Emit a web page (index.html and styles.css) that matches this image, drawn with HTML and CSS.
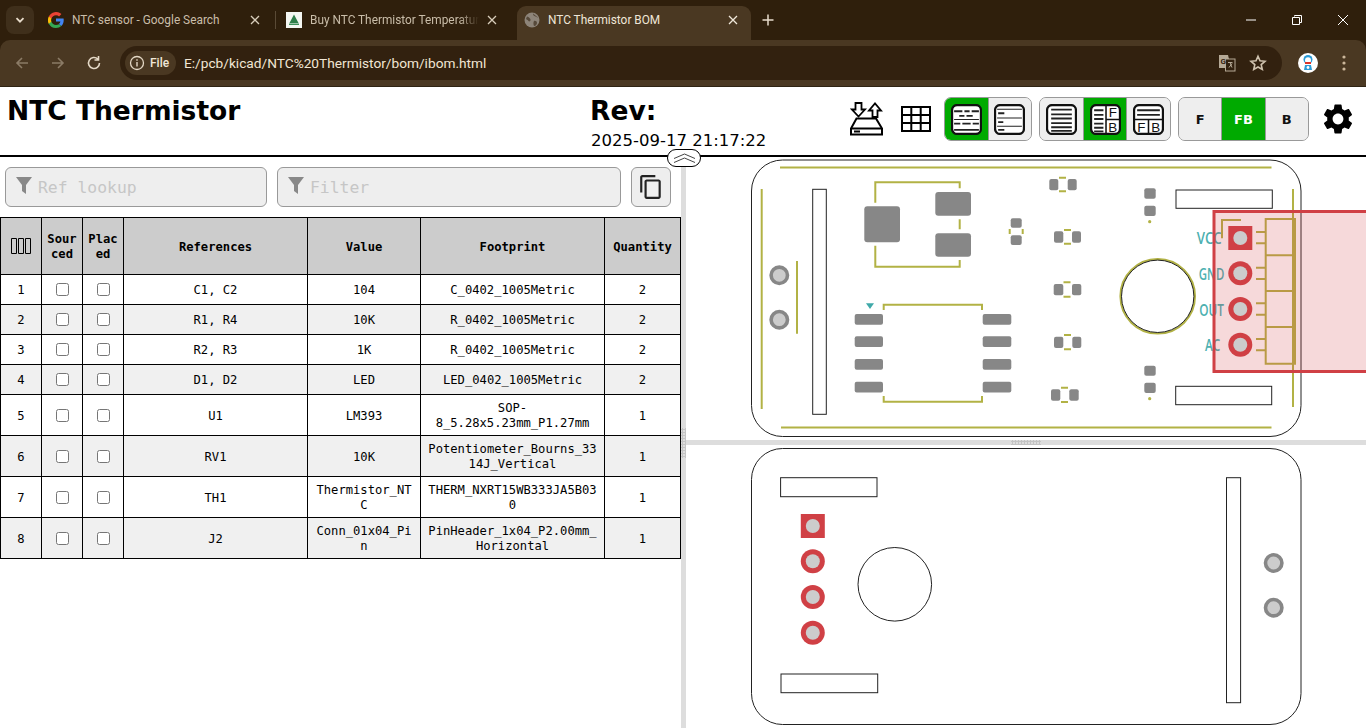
FILE: index.html
```html
<!DOCTYPE html>
<html lang="en">
<head>
<meta charset="utf-8">
<title>NTC Thermistor BOM</title>
<link rel="stylesheet" href="styles.css">
</head>
<body>
<div class="browser">
  <div class="tabstrip">
    <div class="tabsearch"><svg width="12" height="12" viewBox="0 0 12 12"><path d="M2.500 4.200 6 7.700l3.500-3.500" fill="none" stroke="#e8dccb" stroke-width="1.800"/></svg></div>
    <div class="tab tab1">
      <svg class="fav" width="16" height="16" viewBox="0 0 16 16"><path d="M15.700 8.200c0-.6-.05-1.100-.15-1.600H8v3h4.400a3.700 3.700 0 0 1-1.600 2.500l2.500 1.900c1.500-1.400 2.400-3.400 2.400-5.800z" fill="#4285f4"/><path d="M8 16c2.200 0 4-.7 5.300-1.900l-2.500-1.900c-.7.5-1.600.8-2.800.8-2.100 0-3.900-1.400-4.600-3.300H.8v2A8 8 0 0 0 8 16z" fill="#34a853"/><path d="M3.400 9.700a4.800 4.800 0 0 1 0-3.100v-2H.8a8 8 0 0 0 0 7.200z" fill="#fbbc05"/><path d="M8 3.200c1.200 0 2.300.4 3.100 1.200l2.300-2.300A8 8 0 0 0 .8 4.500l2.600 2C4.100 4.600 5.900 3.200 8 3.200z" fill="#ea4335"/></svg>
      <span class="tabtext">NTC sensor - Google Search</span>
      <svg class="x" width="10" height="10" viewBox="0 0 10 10"><path d="M1 1l8 8M9 1 1 9" stroke="#d8cdbb" stroke-width="1.300"/></svg>
    </div>
    <div class="tabsep"></div>
    <div class="tab tab2">
      <svg class="fav" width="16" height="16" viewBox="0 0 16 16"><rect width="16" height="16" fill="#f4f6f2"/><path d="M8 2.500 12.500 11h-9z" fill="#2f7d4a"/><rect x="3" y="11.500" width="10" height="1.500" fill="#3f8f5a"/></svg>
      <span class="tabtext fade">Buy NTC Thermistor Temperature</span>
      <svg class="x" width="10" height="10" viewBox="0 0 10 10"><path d="M1 1l8 8M9 1 1 9" stroke="#d8cdbb" stroke-width="1.300"/></svg>
    </div>
    <div class="tab active">
      <svg class="fav" width="16" height="16" viewBox="0 0 16 16"><circle cx="8" cy="8" r="7.500" fill="#8d8479"/><path d="M3 4.500c2 .5 3 1.500 3.500 3S5 10 4.500 9 2 7 2 7zM9 1.500c0 2 1 2.500 2.500 3S14 6 14.500 6M10 9c1.500-.5 3 .5 3 2s-1.500 3-2.500 3-1.500-3.500-.5-5z" fill="#56493a"/></svg>
      <span class="tabtext">NTC Thermistor BOM</span>
      <svg class="x" width="10" height="10" viewBox="0 0 10 10"><path d="M1 1l8 8M9 1 1 9" stroke="#f0e8da" stroke-width="1.300"/></svg>
    </div>
    <svg class="plus" width="12" height="12" viewBox="0 0 12 12"><path d="M6 .5v11M.5 6h11" stroke="#e8dccb" stroke-width="1.500"/></svg>
    <div class="winctl">
      <svg width="12" height="12" viewBox="0 0 12 12"><path d="M1 6h10" stroke="#fff"/></svg>
      <svg width="12" height="12" viewBox="0 0 12 12"><path d="M3.500 2.500V1.500h7v7h-1.500M1.500 3.500h7v7h-7z" fill="none" stroke="#fff"/></svg>
      <svg width="12" height="12" viewBox="0 0 12 12"><path d="M1 1l10 10M11 1 1 11" stroke="#fff"/></svg>
    </div>
  </div>
  <div class="toolbar">
    <svg class="nav" width="16" height="16" viewBox="0 0 16 16"><path d="M14 8H3M8 3 3 8l5 5" fill="none" stroke="#8b7b66" stroke-width="1.600"/></svg>
    <svg class="nav" width="16" height="16" viewBox="0 0 16 16"><path d="M2 8h11M8 3l5 5-5 5" fill="none" stroke="#8b7b66" stroke-width="1.600"/></svg>
    <svg class="nav" width="16" height="16" viewBox="0 0 16 16"><path d="M13.500 8a5.500 5.500 0 1 1-1.700-4M12.500 1v4h-4" fill="none" stroke="#e4d8c6" stroke-width="1.600"/></svg>
    <div class="omnibox">
      <div class="chip">
        <svg width="16" height="16" viewBox="0 0 16 16"><circle cx="8" cy="8" r="6.500" fill="none" stroke="#e4d8c6" stroke-width="1.300"/><path d="M8 7v4.500M8 4.300v1.400" stroke="#e4d8c6" stroke-width="1.400"/></svg>
        <span>File</span>
      </div>
      <span class="url">E:/pcb/kicad/NTC%20Thermistor/bom/ibom.html</span>
      <svg class="translate" width="18" height="18" viewBox="0 0 18 18"><path d="M1 1h9l1 4v9H1z" fill="#b5a996"/><rect x="7.500" y="5" width="9.500" height="12" fill="#32210f" stroke="#b5a996"/><text x="2.500" y="10" class="tg">G</text><path d="M10 8.500h4.500M12 8.500l2 5M14 9.500l-3 4" stroke="#b5a996" fill="none"/></svg>
      <svg class="star" width="18" height="18" viewBox="0 0 18 18"><path d="M9 2.200l2 4.600 5 .5-3.800 3.300 1.100 4.900L9 13l-4.300 2.500 1.100-4.900L2 7.300l5-.5z" fill="none" stroke="#cfc2ae" stroke-width="1.600"/></svg>
    </div>
    <svg class="avatar" width="20" height="20" viewBox="0 0 20 20"><circle cx="10" cy="10" r="10" fill="#fff"/><circle cx="10" cy="6.500" r="4.500" fill="#2a9ad6"/><circle cx="10" cy="7.200" r="3" fill="#fff"/><rect x="7" y="9" width="6" height="2" fill="#d9352b"/><path d="M7 12h6l1 5H6z" fill="#2a9ad6"/><circle cx="10" cy="14.500" r="1.400" fill="#fff"/></svg>
    <svg class="dots" width="4" height="16" viewBox="0 0 4 16"><circle cx="2" cy="2" r="1.600" fill="#cbb69a"/><circle cx="2" cy="8" r="1.600" fill="#cbb69a"/><circle cx="2" cy="14" r="1.600" fill="#cbb69a"/></svg>
  </div>
</div>

<div class="page">
  <header class="topbar">
    <div class="title">NTC Thermistor</div>
    <div class="rev">
      <div class="revlabel">Rev:</div>
      <div class="revdate">2025-09-17 21:17:22</div>
    </div>
    <div class="tools">
      <svg class="tool-save" width="33" height="34" viewBox="0 0 33 34"><path d="M5.500 1h6v6.500H15L8.500 14.500 2 7.500h3.500z" fill="#fff" stroke="#000" stroke-width="1.800"/><path d="M22.500 15V8.500H19L25 1.500l6 7h-3.500V15z" fill="#fff" stroke="#000" stroke-width="1.800"/><path d="M6.500 16.500H26L32 26.500V32.500H1V26.500Z" fill="#fff" stroke="#000" stroke-width="2"/><path d="M1 26.500h31M4 29.500h6" stroke="#000" stroke-width="2" fill="none"/></svg>
      <svg class="tool-grid" width="30" height="26" viewBox="0 0 30 26"><path d="M1 1h28v24H1zM1 9h28M1 17h28M10.300 1v24M19.700 1v24" fill="none" stroke="#000" stroke-width="2"/></svg>
      <div class="group g1">
        <div class="btn on"><svg class="ic" viewBox="0 0 30 30"><rect x="1" y="1" width="28" height="28" rx="5"/><path class="ln" d="M3 7h8M13 7h5M20 7h7M8 11.500h5M15 11.500h6M3 19h6M11 19h8M21 19h6M3 25h24"/><path class="th" d="M3 15h24"/></svg></div>
        <div class="btn"><svg class="ic" viewBox="0 0 30 30"><rect x="1" y="1" width="28" height="28" rx="5"/><path class="th" d="M3 5h24M3 13.500h24M3 21.500h24"/><path class="ln" d="M4 9h6M4 17.500h5M4 25h6"/></svg></div>
      </div>
      <div class="group g2">
        <div class="btn"><svg class="ic" viewBox="0 0 30 30"><rect x="1" y="1" width="28" height="28" rx="5"/><path class="ln" d="M5 5.500h20M5 10h20M5 14h20M5 18.500h20M5 22.500h20M5 26h20"/></svg></div>
        <div class="btn on"><svg class="ic" viewBox="0 0 30 30"><rect x="1" y="1" width="28" height="28" rx="5"/><path class="ln" d="M4 6h9M4 10.500h9M4 14.500h9M4 19h9M4 23h9M4 26.500h9"/><path class="bar" d="M15.500 1v28M15.500 15H29"/><text x="22" y="13" class="ic-t">F</text><text x="22" y="27" class="ic-t">B</text></svg></div>
        <div class="btn"><svg class="ic" viewBox="0 0 30 30"><rect x="1" y="1" width="28" height="28" rx="5"/><path class="ln" d="M4 6h22M4 10.500h22"/><path class="bar" d="M1 15h28M15 15v14"/><text x="8" y="27" class="ic-t">F</text><text x="22" y="27" class="ic-t">B</text></svg></div>
      </div>
      <div class="group g3">
        <div class="btn txt">F</div>
        <div class="btn txt on">FB</div>
        <div class="btn txt">B</div>
      </div>
      <svg class="gear" width="36" height="36" viewBox="0 0 24 24"><path d="M19.140 12.940c.04-.3.06-.61.06-.94 0-.32-.02-.64-.07-.94l2.030-1.580c.18-.14.23-.41.12-.61l-1.920-3.320c-.12-.22-.37-.29-.59-.22l-2.390.96c-.5-.38-1.030-.7-1.620-.94l-.36-2.540c-.04-.24-.24-.41-.48-.41h-3.840c-.24 0-.43.17-.47.41l-.36 2.540c-.59.24-1.130.57-1.620.94l-2.390-.96c-.22-.08-.47 0-.59.22L2.740 8.870c-.12.21-.08.47.12.61l2.030 1.580c-.05.3-.09.63-.09.94s.02.64.07.94l-2.030 1.580c-.18.14-.23.41-.12.61l1.920 3.320c.12.22.37.29.59.22l2.390-.96c.5.38 1.030.7 1.620.94l.36 2.540c.05.24.24.41.48.41h3.840c.24 0 .44-.17.47-.41l.36-2.540c.59-.24 1.130-.56 1.620-.94l2.390.96c.22.08.47 0 .59-.22l1.920-3.320c.12-.22.07-.47-.12-.61l-2.010-1.580zM12 15.600c-1.980 0-3.600-1.620-3.600-3.600s1.620-3.600 3.600-3.600 3.600 1.620 3.600 3.600-1.620 3.600-3.600 3.600z" fill="#000"/></svg>
    </div>
    <div class="collapse"><svg width="23" height="10" viewBox="0 0 23 10"><path d="M1 5.500 11.500 1 22 5.500M1 9.500 11.500 5 22 9.500" fill="none" stroke="#444" stroke-width="1"/></svg></div>
  </header>

  <main class="split">
    <section class="bompane">
      <div class="filters">
        <label class="search ref">
          <svg width="16" height="17" viewBox="0 0 16 17"><path d="M0 0h16l-6 8v9l-4-3V8z" fill="#888"/></svg>
          <input type="text" placeholder="Ref lookup">
        </label>
        <label class="search flt">
          <svg width="16" height="17" viewBox="0 0 16 17"><path d="M0 0h16l-6 8v9l-4-3V8z" fill="#888"/></svg>
          <input type="text" placeholder="Filter">
        </label>
        <div class="copybtn"><svg width="26" height="26" viewBox="0 0 24 24"><path d="M16 1H4c-1.100 0-2 .9-2 2v14h2V3h12V1zm3 4H8c-1.100 0-2 .9-2 2v14c0 1.100.9 2 2 2h11c1.100 0 2-.9 2-2V7c0-1.100-.9-2-2-2zm0 16H8V7h11v14z" fill="#222"/></svg></div>
      </div>
      <table class="bom">
        <colgroup><col class="c1"><col class="c1"><col class="c1"><col class="c2"><col class="c3"><col class="c2"><col class="c4"></colgroup>
        <thead>
          <tr><th><svg class="tofu" width="20" height="16" viewBox="0 0 20 16"><path d="M.5.500h5v15h-5zM7.500.500h5v15h-5zM14.500.500h5v15h-5z" fill="none" stroke="#000"/></svg></th><th>Sourced</th><th>Placed</th><th>References</th><th>Value</th><th>Footprint</th><th>Quantity</th></tr>
        </thead>
        <tbody>
          <tr><td>1</td><td><input type="checkbox"></td><td><input type="checkbox"></td><td>C1, C2</td><td>104</td><td>C_0402_1005Metric</td><td>2</td></tr>
          <tr><td>2</td><td><input type="checkbox"></td><td><input type="checkbox"></td><td>R1, R4</td><td>10K</td><td>R_0402_1005Metric</td><td>2</td></tr>
          <tr><td>3</td><td><input type="checkbox"></td><td><input type="checkbox"></td><td>R2, R3</td><td>1K</td><td>R_0402_1005Metric</td><td>2</td></tr>
          <tr><td>4</td><td><input type="checkbox"></td><td><input type="checkbox"></td><td>D1, D2</td><td>LED</td><td>LED_0402_1005Metric</td><td>2</td></tr>
          <tr><td>5</td><td><input type="checkbox"></td><td><input type="checkbox"></td><td>U1</td><td>LM393</td><td>SOP-8_5.28x5.23mm_P1.27mm</td><td>1</td></tr>
          <tr><td>6</td><td><input type="checkbox"></td><td><input type="checkbox"></td><td>RV1</td><td>10K</td><td>Potentiometer_Bourns_3314J_Vertical</td><td>1</td></tr>
          <tr><td>7</td><td><input type="checkbox"></td><td><input type="checkbox"></td><td>TH1</td><td>Thermistor_NTC</td><td>THERM_NXRT15WB333JA5B030</td><td>1</td></tr>
          <tr><td>8</td><td><input type="checkbox"></td><td><input type="checkbox"></td><td>J2</td><td>Conn_01x04_Pin</td><td>PinHeader_1x04_P2.00mm_Horizontal</td><td>1</td></tr>
        </tbody>
      </table>
    </section>
    <div class="vgutter"><div class="vgrip"></div></div>
    <section class="boards">
      <svg class="board" width="680" height="283" viewBox="686 157 680 283">
        <rect class="edge" x="751.500" y="160" width="549.500" height="276.500" rx="31"/>
        <g class="silk">
          <path d="M780 167.500H1271.500M781 427.500H1271.500M761.700 189V409M1293 189V407M797 261V333.700"/>
          <path d="M875.300 202.700V182.300H959.700V188.300M959.700 219.300V229.300M875.300 245.700V266.700H959.700V260"/>
          <path d="M883.700 310V304.700H982V310M883.700 396V401.700H982V396"/>
          <path d="M1009.700 229V234M1022.700 229V234"/>
          <path d="M1059 177.700H1066M1059 191.300H1066M1064 230H1071M1064 243.700H1071M1063.500 282.300H1070.500M1063.500 296.700H1070.500M1064 335H1071M1064 349.300H1071M1061 387.700H1068M1061 402H1068"/>
          <circle cx="1157.700" cy="296.300" r="37.300"/>
        </g>
        <circle class="dot" cx="1149.700" cy="221.700" r="1.600"/>
        <circle class="dot" cx="1149.700" cy="398.700" r="1.600"/>
        <path class="tri" d="M866 303.300h8l-4 5.700z"/>
        <g class="pad">
          <rect x="864.300" y="206.300" width="35.700" height="36" rx="3"/>
          <rect x="935.300" y="192" width="35.700" height="23.700" rx="3"/>
          <rect x="935.300" y="233.300" width="35.700" height="23.400" rx="3"/>
          <rect x="1010.700" y="218.300" width="11" height="9.400" rx="2"/>
          <rect x="1010.700" y="235.300" width="11" height="9.700" rx="2"/>
          <rect x="854.700" y="314" width="28.300" height="10.700" rx="2"/>
          <rect x="854.700" y="336.300" width="28.300" height="10.700" rx="2"/>
          <rect x="854.700" y="359" width="28.300" height="10.700" rx="2"/>
          <rect x="854.700" y="381.700" width="28.300" height="10.700" rx="2"/>
          <rect x="982.700" y="314" width="28.600" height="10.700" rx="2"/>
          <rect x="982.700" y="336.300" width="28.600" height="10.700" rx="2"/>
          <rect x="982.700" y="359" width="28.600" height="10.700" rx="2"/>
          <rect x="982.700" y="381.700" width="28.600" height="10.700" rx="2"/>
          <rect x="1049.300" y="179" width="9" height="11.300" rx="2"/>
          <rect x="1067.700" y="179" width="9" height="11.300" rx="2"/>
          <rect x="1054" y="231.300" width="9.300" height="11.400" rx="2"/>
          <rect x="1072" y="231.300" width="9" height="11.400" rx="2"/>
          <rect x="1053.700" y="284" width="9.600" height="11.300" rx="2"/>
          <rect x="1072" y="284" width="9.300" height="11.300" rx="2"/>
          <rect x="1054" y="336.700" width="9.300" height="11.300" rx="2"/>
          <rect x="1072.300" y="336.700" width="9" height="11.300" rx="2"/>
          <rect x="1051" y="389.300" width="9.300" height="11.400" rx="2"/>
          <rect x="1069.300" y="389.300" width="9.400" height="11.400" rx="2"/>
          <rect x="1144.300" y="188.300" width="11.400" height="10.400" rx="2"/>
          <rect x="1144.300" y="205.700" width="11.400" height="10.300" rx="2"/>
          <rect x="1144.300" y="365.700" width="11.400" height="10" rx="2"/>
          <rect x="1144.300" y="382.700" width="11.400" height="10.300" rx="2"/>
        </g>
        <g class="fab">
          <rect x="812.700" y="189.300" width="13.600" height="225"/>
          <rect x="1176" y="190" width="96.300" height="18.300"/>
          <rect x="1175.700" y="386.300" width="96" height="18.400"/>
          <circle cx="1157.700" cy="296.300" r="36.200"/>
        </g>
        <g class="thru"><circle cx="779.300" cy="275.300" r="8.200"/><circle cx="779.300" cy="319.700" r="8.200"/></g>
        <g class="silktext">
          <text x="1196.700" y="244" textLength="25" lengthAdjust="spacingAndGlyphs">VCC</text>
          <text x="1198.700" y="279.500" textLength="25.600" lengthAdjust="spacingAndGlyphs">GND</text>
          <text x="1199.300" y="315.800" textLength="24.700" lengthAdjust="spacingAndGlyphs">OUT</text>
          <text x="1205" y="351" textLength="15.300" lengthAdjust="spacingAndGlyphs">AC</text>
        </g>
        <rect class="hl" x="1214" y="211.500" width="160" height="160"/>
        <g class="silk2">
          <path d="M1222 238.300V220H1241M1256 232H1265.700M1256 243.300H1265.700M1256 267.700H1265.700M1256 279H1265.700M1256 303.300H1265.700M1256 314.700H1265.700M1256 339H1265.700M1256 350.300H1265.700"/>
          <path d="M1265.700 219H1295V363.700H1265.700ZM1265.700 255.300H1295M1265.700 291H1295M1265.700 327H1295"/>
        </g>
        <g class="red">
          <rect x="1228.300" y="226" width="24" height="24"/>
          <circle cx="1240.300" cy="273.300" r="12"/><circle cx="1240.300" cy="309" r="12"/><circle cx="1240.300" cy="344.700" r="12"/>
        </g>
        <g class="hole">
          <circle cx="1240.300" cy="238" r="7"/><circle cx="1240.300" cy="273.300" r="7"/><circle cx="1240.300" cy="309" r="7"/><circle cx="1240.300" cy="344.700" r="7"/>
        </g>
      </svg>
      <div class="hgutter"><div class="hgrip"></div></div>
      <svg class="board" width="680" height="283" viewBox="686 445 680 283">
        <rect class="edge" x="751.500" y="448.500" width="549.500" height="276" rx="31"/>
        <g class="fab">
          <rect x="780.600" y="477.700" width="96.400" height="19"/>
          <rect x="781" y="674" width="96.700" height="18.700"/>
          <rect x="1226.500" y="477.700" width="14.100" height="225"/>
          <circle cx="894.800" cy="584.300" r="36.800"/>
        </g>
        <g class="thru"><circle cx="1273.700" cy="563" r="8.200"/><circle cx="1273.700" cy="607.700" r="8.200"/></g>
        <g class="red">
          <rect x="800.800" y="514" width="24" height="24"/>
          <circle cx="812.800" cy="561.300" r="12"/><circle cx="812.800" cy="597" r="12"/><circle cx="812.800" cy="632.700" r="12"/>
        </g>
        <g class="hole">
          <circle cx="812.800" cy="526" r="7"/><circle cx="812.800" cy="561.300" r="7"/><circle cx="812.800" cy="597" r="7"/><circle cx="812.800" cy="632.700" r="7"/>
        </g>
      </svg>
    </section>
  </main>
</div>
</body>
</html>
```

FILE: styles.css
```css
* { box-sizing: border-box; }
html, body { margin: 0; padding: 0; height: 728px; overflow: hidden; background: #fff; }
body { display: flex; flex-direction: column; font-family: "DejaVu Sans", sans-serif; }

/* Browser frame */
.browser { height: 87px; flex: none; background: #2f1f0c; font-family: Roboto, "Noto Sans", sans-serif; }
.tabstrip { height: 40px; display: flex; align-items: flex-end; padding-left: 6px; }
.tabsearch { width: 28px; height: 28px; margin-bottom: 6px; border-radius: 8px; background: #3f2f1b; display: flex; align-items: center; justify-content: center; margin-right: 8px; }
.tab { height: 34px; display: flex; align-items: center; font-size: 11.850px; color: #c9bda9; padding: 0 0 6px 6px; }
.tab .fav { flex: none; margin-right: 8px; }
.tabtext { flex: 1; white-space: nowrap; overflow: hidden; }
.tab .x { flex: none; margin-right: 6px; }
.tab1 { width: 233px; }
.tab1 .x { margin-right: 15px; }
.tabsep { width: 1px; height: 18px; background: #5a4a36; margin-bottom: 11px; margin-right: 10px; }
.tab2 { width: 231px; padding-left: 0; }
.tab2 .x { margin-right: 20px; }
.tab2 .tabtext { margin-right: 8px; }
.fade { -webkit-mask-image: linear-gradient(to right, #000 88%, transparent 100%); mask-image: linear-gradient(to right, #000 88%, transparent 100%); }
.active { width: 234px; background: #4a3822; color: #efe6d8; border-radius: 9px 9px 0 0; padding-left: 7px; }
.active .x { margin-right: 13px; }
.plus { margin: 0 0 14px 11px; }
.winctl { margin-left: auto; display: flex; align-items: center; gap: 34px; padding-right: 17px; height: 40px; }
.toolbar { height: 47px; background: #4a3822; border-radius: 10px 10px 0 0; border-bottom: 1px solid #2f2414; display: flex; align-items: center; padding-left: 14px; }
.nav { margin-right: 20px; flex: none; }
.nav:nth-child(3) { margin-right: 18px; }
.omnibox { width: 1162px; height: 34px; border-radius: 17px; background: #32210f; display: flex; align-items: center; padding: 0 15px 0 5px; }
.chip { width: 51px; height: 24px; border-radius: 12px; background: #4a3822; display: flex; align-items: center; gap: 5px; padding-left: 4px; color: #f0e7d8; font-size: 12px; font-weight: 500; flex: none; }
.url { color: #f1e6d4; font-size: 13.700px; margin-left: 8px; flex: 1; white-space: nowrap; }
.translate { margin-right: 13px; flex: none; }
.star { flex: none; }
.tg { font-size: 8px; font-weight: 700; fill: #32210f; font-family: Roboto, sans-serif; }
.avatar { margin-left: 16px; flex: none; }
.dots { margin-left: 24px; flex: none; }

/* Page */
.page { flex: 1; min-height: 0; display: flex; flex-direction: column; }
.topbar { height: 70px; flex: none; border-bottom: 2px solid #000; display: flex; position: relative; padding-left: 7px; color: #000; }
.title { width: 583px; font-size: 26.500px; font-weight: 700; line-height: 48px; flex: none; }
.rev { flex: none; }
.revlabel { font-size: 26.500px; font-weight: 700; line-height: 48px; }
.revdate { font-size: 16.500px; line-height: 20px; margin: -4px 0 0 1px; }
.tools { margin-left: auto; display: flex; align-items: center; height: 66px; padding: 0 10px 2px 0; }
.tool-save { margin-right: 18px; }
.tool-grid { margin-right: 13px; }
.group { display: flex; height: 44px; border: 1px solid #999; border-radius: 7px; overflow: hidden; background: #eee; margin-right: 7px; }
.g1 { width: 88px; }
.g2 { width: 132px; }
.g3 { width: 131px; margin-right: 0; }
.btn { flex: 1; height: 42px; display: flex; align-items: center; justify-content: center; border-left: 1px solid #999; background: #eee; }
.btn:first-child { border-left: 0; }
.btn.on { background: #0a0; }
.txt { font-size: 13px; font-weight: 700; color: #111; }
.txt.on { color: #fff; }
.ic { width: 31px; height: 31px; }
.ic rect { fill: #fff; stroke: #111; stroke-width: 2.200; }
.ic .ln { stroke: #222; stroke-width: 1.800; fill: none; }
.ic .th { stroke: #222; stroke-width: 1; fill: none; }
.ic .bar { stroke: #111; stroke-width: 1.500; fill: none; }
.ic-t { font-family: "Liberation Sans", sans-serif; font-size: 13px; fill: #111; text-anchor: middle; }
.gear { margin-left: 11px; }
.collapse { position: absolute; left: 667px; top: 62px; width: 34px; height: 18px; background: #fff; border: 1px solid #000; border-radius: 9px; display: flex; align-items: center; justify-content: center; }

.split { flex: 1; min-height: 0; display: flex; }
.bompane { width: 681px; flex: none; padding-top: 10px; }
.filters { display: flex; gap: 10px; padding-left: 5px; height: 40px; margin-bottom: 10px; }
.search { height: 40px; border: 1px solid #999; border-radius: 6px; background: #eee; display: flex; align-items: center; padding-left: 10px; gap: 6px; }
.search svg { flex: none; margin-top: -4px; }
.ref { width: 262px; }
.flt { width: 344px; }
.search input { flex: 1; min-width: 0; border: 0; outline: 0; background: transparent; font-family: "DejaVu Sans Mono", monospace; font-size: 16.400px; padding: 0; }
.search input::placeholder { color: #c6c6c6; }
.copybtn { width: 40px; height: 40px; border: 1px solid #999; border-radius: 6px; background: #eee; display: flex; align-items: center; justify-content: center; }

.bom { width: 680px; table-layout: fixed; border-collapse: collapse; font-family: "DejaVu Sans Mono", monospace; font-size: 12.170px; line-height: 15px; color: #000; }
.c1 { width: 41px; }
.c2 { width: 184px; }
.c3 { width: 113px; }
.c4 { width: 76px; }
.bom th, .bom td { border: 1px solid #000; padding: 6px 5px 4px; text-align: center; overflow-wrap: break-word; }
.bom th { background: #ccc; height: 57px; font-weight: 700; }
.bom td { height: 30px; }
.bom tbody tr:nth-child(even) { background: #f0f0f0; }
.bom input { margin: 0 auto; display: block; position: relative; top: -1px; }
.tofu { display: block; margin: 0 auto; position: relative; top: -1px; }

.vgutter { width: 5px; flex: none; background: #ddd; display: flex; align-items: center; }
.vgrip, .hgrip { background-image: radial-gradient(circle at center, #c4c4c4 1px, transparent 1.100px); background-size: 3px 3px; }
.vgrip { width: 5px; height: 30px; }
.boards { flex: 1; min-width: 0; display: flex; flex-direction: column; }
.hgutter { height: 5px; flex: none; background: #ddd; display: flex; justify-content: center; }
.hgrip { width: 30px; height: 5px; }
.board { display: block; flex: none; }

.edge { fill: #fff; stroke: #222; stroke-width: 1; }
.silk { fill: none; stroke: #b2b245; stroke-width: 2; }
.silk2 { fill: none; stroke: #b99a45; stroke-width: 2; }
.silktext { font-family: "Open Sans", sans-serif; font-size: 16px; font-weight: 600; fill: #4cb0b0; }
.dot { fill: #b2b245; }
.tri { fill: #3fa9a9; }
.pad { fill: #878787; }
.fab { fill: none; stroke: #222; stroke-width: 1; }
.fab rect { fill: #fff; }
.thru circle { fill: #ccc; stroke: #878787; stroke-width: 3.600; }
.red { fill: #d04045; }
.hole { fill: #ccc; }
.hl { fill: rgba(208, 64, 69, 0.2); stroke: #d04045; stroke-width: 3; }
```
